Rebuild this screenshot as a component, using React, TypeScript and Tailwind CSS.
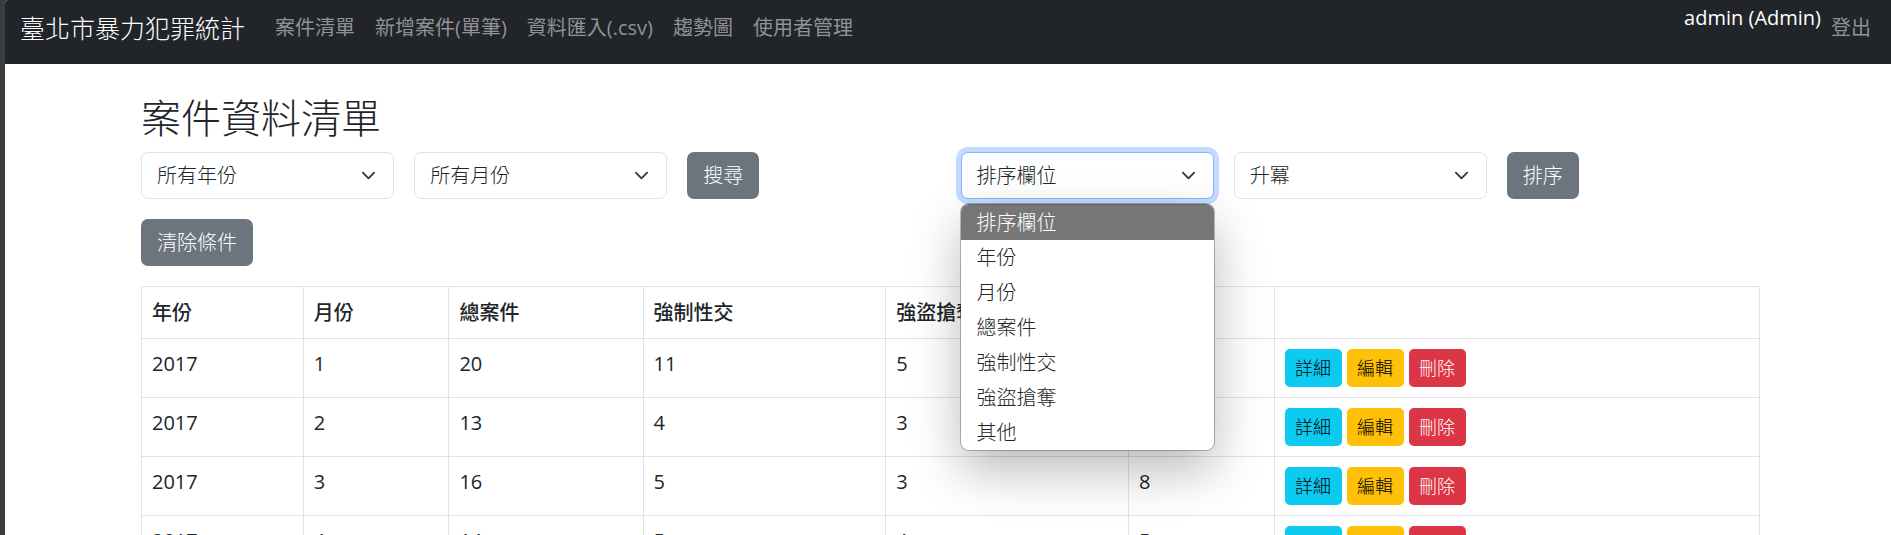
import React from "react";

const NAV_LINKS = ["案件清單", "新增案件(單筆)", "資料匯入(.csv)", "趨勢圖", "使用者管理"];
const SORT_FIELDS = ["排序欄位", "年份", "月份", "總案件", "強制性交", "強盜搶奪", "其他"];

const COLUMNS = [
  { label: "年份", width: "w-[10%]" },
  { label: "月份", width: "w-[9%]" },
  { label: "總案件", width: "w-[12%]" },
  { label: "強制性交", width: "w-[15%]" },
  { label: "強盜搶奪", width: "w-[15%]" },
  { label: "其他", width: "w-[9%]" },
  { label: "", width: "w-[30%]" },
];

const ROWS = [
  [2017, 1, 20, 11, 5, 4],
  [2017, 2, 13, 4, 3, 6],
  [2017, 3, 16, 5, 3, 8],
  [2017, 4, 14, 5, 4, 5],
];

function SelectBox({ label, options, open = false }: { label: string; options: string[]; open?: boolean }) {
  return (
    <div className="relative">
      <select
        aria-label={label}
        className={
          "block h-[47px] w-full appearance-none rounded-[7px] border bg-white pr-10 pl-[15px] leading-[30px] outline-none " +
          (open ? "border-[#86b7fe] ring-[5px] ring-[#c2dbfe]" : "border-[#dee2e6]")
        }
      >
        {options.map((o) => (
          <option key={o}>{o}</option>
        ))}
      </select>
      <svg
        viewBox="0 0 16 16"
        aria-hidden="true"
        className="pointer-events-none absolute top-4 right-[18px] size-[15px]"
        fill="none"
        stroke="#343a40"
        strokeWidth="2"
        strokeLinecap="round"
        strokeLinejoin="round"
      >
        <path d="m2 5 6 6 6-6" />
      </svg>
      {open && (
        <ul
          role="listbox"
          aria-label={label}
          className="absolute top-[52px] left-0 z-10 w-full overflow-hidden rounded-[8px] border-t border-[#636363] bg-white shadow-[0_0_0_1px_rgba(0,0,0,0.25),0_20px_50px_rgba(0,0,0,0.28)]"
        >
          {options.map((o, i) => (
            <li
              key={o}
              role="option"
              aria-selected={i === 0}
              className={"h-[35px] px-4 leading-[35px] " + (i === 0 ? "bg-[#767676] text-white" : "")}
            >
              {o}
            </li>
          ))}
        </ul>
      )}
    </div>
  );
}

function GrayButton({ children }: { children: React.ReactNode }) {
  return (
    <button type="button" className="h-[47px] justify-self-start rounded-[7px] bg-[#6c757d] px-4 text-white">
      {children}
    </button>
  );
}

function RowButton({ color, children }: { color: string; children: React.ReactNode }) {
  return (
    <button type="button" className={"h-[38px] w-[57px] rounded-[5px] text-[18px] " + color}>
      {children}
    </button>
  );
}

export default function App() {
  return (
    <div className="min-h-screen bg-[#3c3c3c] pl-[5px] font-['Open_Sans','Noto_Sans_CJK_TC',sans-serif] text-[20px] leading-[30px] font-light text-[#212529]">
      <div className="min-h-screen overflow-hidden rounded-tl-[4px] bg-white">
        <nav className="flex h-16 items-start bg-[#212529] pt-2 pr-5 pl-[15px] text-[#909294]">
          <a href="#" className="mr-[30px] text-[25px] leading-10 text-white">
            臺北市暴力犯罪統計
          </a>
          <div className="flex gap-5 leading-10 font-normal">
            {NAV_LINKS.map((l) => (
              <a key={l} href="#">
                {l}
              </a>
            ))}
          </div>
          <div className="ml-auto flex gap-[10px] font-normal">
            <span className="leading-5 text-white">admin (Admin)</span>
            <a href="#" className="leading-10">
              登出
            </a>
          </div>
        </nav>

        <main className="pt-[30px] pr-[131px] pl-[136px]">
          <h1 className="mb-[10px] text-[40px] leading-[48px]">案件資料清單</h1>
          <div className="grid grid-cols-6 gap-5">
            <SelectBox label="年份" options={["所有年份"]} />
            <SelectBox label="月份" options={["所有月份"]} />
            <GrayButton>搜尋</GrayButton>
            <SelectBox label="排序欄位" options={SORT_FIELDS} open />
            <SelectBox label="排序方式" options={["升冪"]} />
            <GrayButton>排序</GrayButton>
            <GrayButton>清除條件</GrayButton>
          </div>

          <table className="mt-5 w-full table-fixed border-collapse">
            <thead>
              <tr className="h-[52px]">
                {COLUMNS.map((c) => (
                  <th key={c.label} className={"border border-[#dee2e6] px-[10px] text-left font-medium " + c.width}>
                    {c.label}
                  </th>
                ))}
              </tr>
            </thead>
            <tbody>
              {ROWS.map((row) => (
                <tr key={row[1]}>
                  {row.map((v, i) => (
                    <td key={i} className="border border-[#dee2e6] p-[10px] align-top font-normal">
                      {v}
                    </td>
                  ))}
                  <td className="border border-[#dee2e6] p-[10px]">
                    <div className="flex gap-[5px]">
                      <RowButton color="bg-[#0dcaf0] text-black">詳細</RowButton>
                      <RowButton color="bg-[#ffc107] text-black">編輯</RowButton>
                      <RowButton color="bg-[#dc3545] text-white">刪除</RowButton>
                    </div>
                  </td>
                </tr>
              ))}
            </tbody>
          </table>
        </main>
      </div>
    </div>
  );
}
